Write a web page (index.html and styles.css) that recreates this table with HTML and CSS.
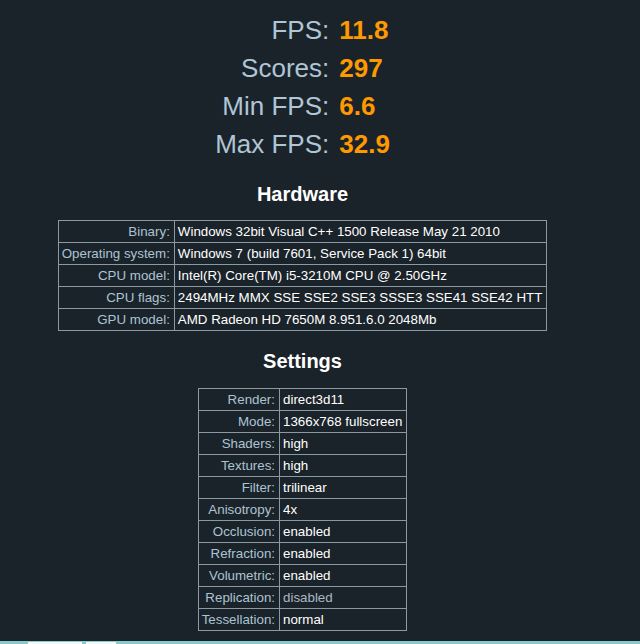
FILE: index.html
```html
<!DOCTYPE html>
<html>
<head>
<meta charset="utf-8">
<link rel="stylesheet" href="styles.css">
</head>
<body>
<div class="page">
  <main class="content">
    <div class="stats">
      <div class="stat-label">FPS:</div><div class="stat-value">11.8</div>
      <div class="stat-label">Scores:</div><div class="stat-value">297</div>
      <div class="stat-label">Min FPS:</div><div class="stat-value">6.6</div>
      <div class="stat-label">Max FPS:</div><div class="stat-value">32.9</div>
    </div>

    <h2 class="heading heading-hw">Hardware</h2>
    <table class="info">
      <tr><td class="label">Binary:</td><td class="value">Windows 32bit Visual C++ 1500 Release May 21 2010</td></tr>
      <tr><td class="label">Operating system:</td><td class="value">Windows 7 (build 7601, Service Pack 1) 64bit</td></tr>
      <tr><td class="label">CPU model:</td><td class="value">Intel(R) Core(TM) i5-3210M CPU @ 2.50GHz</td></tr>
      <tr><td class="label">CPU flags:</td><td class="value">2494MHz MMX SSE SSE2 SSE3 SSSE3 SSE41 SSE42 HTT</td></tr>
      <tr><td class="label">GPU model:</td><td class="value">AMD Radeon HD 7650M 8.951.6.0 2048Mb</td></tr>
    </table>

    <h2 class="heading heading-set">Settings</h2>
    <table class="info">
      <tr><td class="label">Render:</td><td class="value">direct3d11</td></tr>
      <tr><td class="label">Mode:</td><td class="value">1366x768 fullscreen</td></tr>
      <tr><td class="label">Shaders:</td><td class="value">high</td></tr>
      <tr><td class="label">Textures:</td><td class="value">high</td></tr>
      <tr><td class="label">Filter:</td><td class="value">trilinear</td></tr>
      <tr><td class="label">Anisotropy:</td><td class="value">4x</td></tr>
      <tr><td class="label">Occlusion:</td><td class="value">enabled</td></tr>
      <tr><td class="label">Refraction:</td><td class="value">enabled</td></tr>
      <tr><td class="label">Volumetric:</td><td class="value">enabled</td></tr>
      <tr><td class="label">Replication:</td><td class="value muted">disabled</td></tr>
      <tr><td class="label">Tessellation:</td><td class="value">normal</td></tr>
    </table>
  </main>
  <footer class="strip">
    <span class="tab tab-1"></span>
    <span class="tab tab-2"></span>
  </footer>
</div>
</body>
</html>
```

FILE: styles.css
```css
html, body {
  margin: 0;
  padding: 0;
}

body {
  background: #1b232a;
  font-family: "Liberation Sans", Arial, sans-serif;
  color: #ffffff;
}

.page {
  height: 644px;
  display: flex;
  flex-direction: column;
  overflow: hidden;
}

.content {
  width: 605px;
  flex: 1;
  display: flex;
  flex-direction: column;
  align-items: center;
}

.stats {
  margin-top: 11px;
  display: grid;
  grid-template-columns: auto auto;
  column-gap: 10px;
  font-size: 26px;
  line-height: 38px;
}

.stat-label {
  text-align: right;
  color: #aec6d6;
}

.stat-value {
  color: #ff9900;
  font-weight: bold;
}

.heading {
  margin: 0;
  font-size: 20px;
  line-height: 24px;
  font-weight: bold;
  color: #ffffff;
}

.heading-hw {
  margin-top: 19px;
  margin-bottom: 14px;
}

.heading-set {
  margin-top: 18px;
  margin-bottom: 15px;
}

.info {
  border-collapse: collapse;
  border: 1px solid #8b99a3;
  font-size: 13.33px;
  line-height: 15px;
}

.info td {
  border: 1px solid #8b99a3;
  padding: 3px 4px 3px 3px;
  white-space: nowrap;
}

.info .label {
  text-align: right;
  color: #abc3d3;
}

.info .value {
  text-align: left;
  color: #ffffff;
}

.info .value.muted {
  color: #a9b8c3;
}

.strip {
  height: 3px;
  background: #8ccaca;
  display: flex;
  gap: 4px;
  padding-left: 28px;
  align-items: flex-end;
}

.tab {
  display: block;
  height: 2px;
  background: #f4f8f8;
}

.tab-1 {
  width: 54px;
}

.tab-2 {
  width: 30px;
}
```
